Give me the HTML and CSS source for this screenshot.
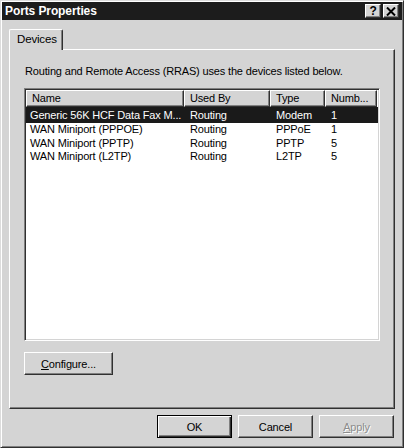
FILE: index.html
```html
<!DOCTYPE html>
<html>
<head>
<meta charset="utf-8">
<link rel="stylesheet" href="styles.css">
</head>
<body>
<div class="window">
  <div class="titlebar">
    <span class="title">Ports Properties</span>
    <div class="tbtns">
      <span class="tbtn help">?</span>
      <span class="tbtn close"><svg width="10" height="9" viewBox="0 0 10 9"><path d="M1 0.5 L9 8.5 M9 0.5 L1 8.5" stroke="#000" stroke-width="2"/></svg></span>
    </div>
  </div>
  <div class="content">
    <div class="tabs"><div class="tab">Devices</div></div>
    <div class="panel">
      <p class="intro">Routing and Remote Access (RRAS) uses the devices listed below.</p>
      <div class="listbox">
        <div class="header">
          <div class="hcell c1">Name</div>
          <div class="hcell c2">Used By</div>
          <div class="hcell c3">Type</div>
          <div class="hcell c4">Numb...</div>
        </div>
        <div class="row selected">
          <div class="cell c1">Generic 56K HCF Data Fax M...</div>
          <div class="cell c2">Routing</div>
          <div class="cell c3">Modem</div>
          <div class="cell c4">1</div>
        </div>
        <div class="row">
          <div class="cell c1">WAN Miniport (PPPOE)</div>
          <div class="cell c2">Routing</div>
          <div class="cell c3">PPPoE</div>
          <div class="cell c4">1</div>
        </div>
        <div class="row">
          <div class="cell c1">WAN Miniport (PPTP)</div>
          <div class="cell c2">Routing</div>
          <div class="cell c3">PPTP</div>
          <div class="cell c4">5</div>
        </div>
        <div class="row">
          <div class="cell c1">WAN Miniport (L2TP)</div>
          <div class="cell c2">Routing</div>
          <div class="cell c3">L2TP</div>
          <div class="cell c4">5</div>
        </div>
      </div>
      <div class="btn configure"><u>C</u>onfigure...</div>
    </div>
    <div class="actions">
      <div class="btn action default">OK</div>
      <div class="btn action">Cancel</div>
      <div class="btn action disabled"><u>A</u>pply</div>
    </div>
  </div>
</div>
</body>
</html>
```

FILE: styles.css
```css
* { box-sizing: border-box; margin: 0; padding: 0; }
html, body { width: 404px; height: 448px; background: #d4d4d4; }
body { font-family: "Liberation Sans", Arial, sans-serif; font-size: 11px; letter-spacing: -0.16px; color: #000; }

.window {
  width: 404px;
  height: 448px;
  background: #d4d4d4;
  border: 1px solid;
  border-color: #dcdcdc #303030 #303030 #dcdcdc;
  box-shadow: inset 1px 1px #ffffff, inset -1px -1px #808080;
  padding: 1px;
}

.titlebar {
  height: 18px;
  background: #1c1c1c;
  display: flex;
  align-items: center;
  justify-content: space-between;
  padding: 0 3px 0 3px;
}
.title { color: #fff; font-weight: bold; font-size: 12px; letter-spacing: -0.1px; }
.tbtns { display: flex; gap: 2px; }
.tbtn {
  width: 16px;
  height: 14px;
  background: #d4d4d4;
  border: 1px solid;
  border-color: #ffffff #303030 #303030 #ffffff;
  box-shadow: inset -1px -1px #808080;
  display: flex;
  align-items: center;
  justify-content: center;
  font-weight: bold;
  font-size: 12px;
  line-height: 1;
}

.content { padding: 9px 7px 0 7px; }

.tabs { display: flex; height: 20px; }
.tab {
  width: 54px;
  height: 21px;
  border: 1px solid;
  border-color: #ffffff #303030 transparent #ffffff;
  border-bottom: none;
  box-shadow: inset -1px 0 #808080;
  background: #d4d4d4;
  padding: 3px 0 0 7px;
  font-size: 11.5px;
  position: relative;
  z-index: 1;
  border-radius: 2px 2px 0 0;
}

.panel {
  height: 360px;
  border: 1px solid;
  border-color: #ffffff #303030 #303030 #ffffff;
  box-shadow: inset -1px -1px #808080;
  padding: 15px 0 0 14px;
  display: flex;
  flex-direction: column;
  align-items: flex-start;
}
.intro { line-height: 13px; padding-left: 1px; }

.listbox {
  margin-top: 10px;
  width: 356px;
  height: 253px;
  background: #fff;
  border: 1px solid;
  border-color: #808080 #ffffff #ffffff #808080;
  box-shadow: inset 1px 1px #303030, inset -1px -1px #d4d4d4;
  padding: 1px;
}
.header { display: flex; height: 17px; }
.hcell {
  background: #d4d4d4;
  border: 1px solid;
  border-color: #ffffff #303030 #303030 #ffffff;
  box-shadow: inset -1px -1px #808080;
  padding: 1px 0 0 5px;
  line-height: 13px;
  white-space: nowrap;
}
.c1 { width: 158px; }
.c2 { width: 86px; }
.c3 { width: 55px; }
.c4 { width: 52px; }

.row { display: flex; height: 13.7px; line-height: 13.7px; }
.row.selected { height: 16px; line-height: 16px; background: #1a1a1a; color: #fff; }
.cell { white-space: nowrap; padding-left: 6px; }
.row .c1 { padding-left: 4px; }

.btn {
  background: #d4d4d4;
  border: 1px solid;
  border-color: #ffffff #303030 #303030 #ffffff;
  box-shadow: inset -1px -1px #808080;
  display: flex;
  align-items: center;
  justify-content: center;
  height: 23px;
}
.configure { margin-top: 11px; width: 89px; }

.actions {
  display: flex;
  justify-content: flex-end;
  gap: 6px;
  margin-top: 6px;
  padding-right: 1px;
}
.action { width: 75px; }
.default {
  border-color: #000;
  box-shadow: inset 1px 1px #ffffff, inset -1px -1px #303030, inset -2px -2px #808080;
}
.disabled { color: #8c8c8c; text-shadow: 1px 1px #ffffff; }
```
